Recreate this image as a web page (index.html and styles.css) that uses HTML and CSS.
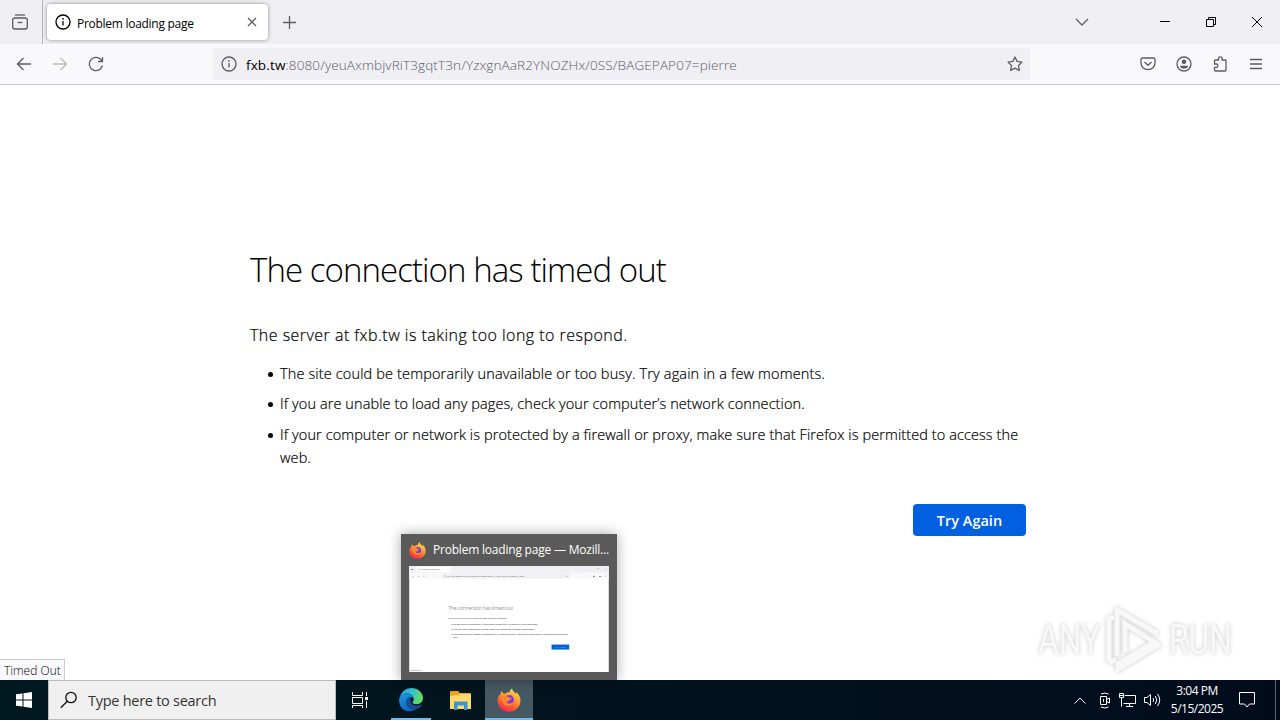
FILE: index.html
```html
<!DOCTYPE html>
<html lang="en">
  <head>
    <meta charset="utf-8">
    <title>Problem loading page</title>
    <link rel="stylesheet" href="styles.css">
  </head>
  <body>
    <svg class="defs" width="0" height="0">
      <defs>
        <linearGradient id="fox-body" x1="0.8" y1="0" x2="0.3" y2="1">
          <stop offset="0" stop-color="#ffe24a" />
          <stop offset="0.4" stop-color="#ffa02e" />
          <stop offset="0.75" stop-color="#ff5038" />
          <stop offset="1" stop-color="#ee2465" />
        </linearGradient>
        <linearGradient id="edge-top" x1="0" y1="0" x2="1" y2="0.3">
          <stop offset="0" stop-color="#229be0" />
          <stop offset="0.5" stop-color="#2fc3d5" />
          <stop offset="1" stop-color="#62dc62" />
        </linearGradient>
        <linearGradient id="edge-side" x1="0" y1="0" x2="0.6" y2="1">
          <stop offset="0" stop-color="#1b9de2" />
          <stop offset="1" stop-color="#1260b4" />
        </linearGradient>
        <symbol id="info" viewBox="0 0 16 16">
          <circle cx="8" cy="8" r="7" fill="none" stroke="currentColor" stroke-width="1.3" />
          <path d="M8 7v4.6" stroke="currentColor" stroke-width="1.3" />
          <circle cx="8" cy="4.8" r="0.9" fill="currentColor" />
        </symbol>
        <symbol id="firefox" viewBox="0 0 24 24">
          <path d="M3.3 6.3 4.4 3l2 2.6 2.1.2C10 4 11.5 4.2 12.5 4.6 12.6 2.8 13.6 1.4 15 .5c.4 2.5 2.2 3.2 4 5.2.5-.5.5-1 .5-1.7C22 6.500 23.500 9 23.500 12.500 23.500 19 18.400 23.800 12 23.800S.6 19 .6 12.700C.6 10 1.500 8 3.300 6.300z" fill="url(#fox-body)" />
          <circle cx="12.300" cy="11.800" r="4.700" fill="#7a3bdf" />
          <path d="M6.500 8.200c2-.7 4.500.2 5.800 1.400 1 .1 2 .3 2.400.8-.5 1.100-2.200 1.300-2.800 2.400-.8 1-1.900 1-2.700.7.700 2.600 4.400 3 7 .5-.4 3.800-8 6-10.500.4-.9-2.200-.3-5 .8-6.200z" fill="#ff8a26" />
        </symbol>
      </defs>
    </svg>

    <div class="tab-bar">
      <div class="view-button">
        <svg width="18" height="18" viewBox="0 0 18 18" class="line">
          <path d="M4 2h10" />
          <rect x="1.700" y="5" width="14.600" height="11" rx="2" />
          <path d="M6.700 9.500h4.600" />
        </svg>
      </div>
      <div class="tab">
        <svg width="16" height="16"><use href="#info" /></svg>
        <span class="tab-title">Problem loading page</span>
        <svg width="10" height="10" viewBox="0 0 10 10" class="line"><path d="M1 1l8 8M9 1 1 9" /></svg>
      </div>
      <svg class="new-tab line" width="13" height="13" viewBox="0 0 13 13"><path d="M6.500 0v13M0 6.500h13" /></svg>
      <div class="window-buttons">
        <svg width="14" height="8" viewBox="0 0 14 8" class="line"><path d="M1 1l6 6 6-6" /></svg>
        <svg width="10" height="10" viewBox="0 0 10 10" class="caption"><path d="M0 4.500h10" /></svg>
        <svg width="10" height="10" viewBox="0 0 10 10" class="caption"><path d="M.5 2.500h7v7h-7zM2.500 2.500v-2h7v7h-2" /></svg>
        <svg width="10" height="10" viewBox="0 0 10 10" class="caption"><path d="M0 0l10 10M10 0 0 10" /></svg>
      </div>
    </div>

    <div class="nav-bar">
      <div class="nav-buttons">
        <svg width="16" height="16" viewBox="0 0 16 16" class="line"><path d="M15 8H1.500M7.500 2l-6 6 6 6" /></svg>
        <svg width="16" height="16" viewBox="0 0 16 16" class="line disabled"><path d="M1 8h13.500M8.500 2l6 6-6 6" /></svg>
        <svg width="16" height="16" viewBox="0 0 16 16" class="line"><path d="M14.400 9.500A6.600 6.600 0 1 1 12.600 3.300L14.300 5M14.500 1v4.500H10" /></svg>
      </div>
      <div class="url-bar">
        <svg width="16" height="16"><use href="#info" /></svg>
        <span class="url"><b>fxb.tw</b>:8080/yeuAxmbjvRiT3gqtT3n/YzxgnAaR2YNOZHx/0SS/BAGEPAP07=pierre</span>
        <svg width="16" height="16" viewBox="0 0 16 16" class="line"><path d="M8 1l2.100 4.400 4.900.7-3.500 3.400.8 4.900L8 12.100l-4.300 2.300.8-4.900L1 6.100l4.900-.7z" /></svg>
      </div>
      <div class="tools">
        <svg width="16" height="16" viewBox="0 0 16 16" class="line"><path d="M2.500 2h11q1.500 0 1.500 1.500V7A7 6.700 0 0 1 1 7V3.500Q1 2 2.500 2zM4.500 6 8 9.300 11.500 6" /></svg>
        <svg width="16" height="16" viewBox="0 0 16 16" class="line"><circle cx="8" cy="8" r="7" /><circle cx="8" cy="5.800" r="2.300" class="solid" /><path d="M4 9.700h8c0 3.800-8 3.800-8 0z" class="solid" /></svg>
        <svg width="16" height="16" viewBox="0 0 16 16" class="line"><path d="M6.500 4V2.600a1.800 1.800 0 0 1 3.600 0V4H13.300q.7 0 .7.700V14.200q0 .8-.8.8H3.500q-1 0-1-1V11.300H4.300a1.600 1.600 0 0 0 0-3.300H2.500V5q0-1 1-1z" /></svg>
        <svg width="16" height="16" viewBox="0 0 16 16" class="line"><path d="M2 3.500h12M2 8h12M2 12.500h12" /></svg>
      </div>
    </div>

    <main class="page">
      <div class="error">
        <h1>The connection has timed out</h1>
        <p>The server at fxb.tw is taking too long to respond.</p>
        <ul>
          <li>The site could be temporarily unavailable or too busy. Try again in a few moments.</li>
          <li>If you are unable to load any pages, check your computer’s network connection.</li>
          <li>If your computer or network is protected by a firewall or proxy, make sure that Firefox is permitted to access the<br>web.</li>
        </ul>
        <button class="try-again">Try Again</button>
      </div>

      <div class="status">Timed Out</div>

      <div class="preview">
        <div class="preview-title">
          <svg width="17" height="17"><use href="#firefox" /></svg>
          <span>Problem loading page — Mozill...</span>
        </div>
        <svg class="preview-page" width="200" height="106" viewBox="0 0 1280 680">
          <rect width="1280" height="680" fill="#fff" />
          <rect width="1280" height="44" fill="#f0f0f4" />
          <rect y="44" width="1280" height="40" fill="#f9f9fb" />
          <rect x="47" y="4" width="221" height="36" fill="#fff" />
          <rect x="213" y="48" width="817" height="32" fill="#f0f0f4" />
          <g font-size="15" fill="#555">
            <text x="12" y="28">▣</text>
            <text x="56" y="28" textLength="138">ⓘ Problem loading</text>
            <text x="246" y="28">× +</text>
            <text x="1160" y="28" textLength="104">– ❐ ×</text>
            <text x="16" y="71" textLength="88">← → ↻</text>
            <text x="220" y="71" textLength="517">ⓘ fxb.tw:8080/yeuAxmbjvRiT3gqtT3n/YzxgnAaR2YNOZHx/0SS</text>
            <text x="1006" y="71">☆</text>
            <text x="1140" y="71" textLength="124">♡ ◉ ▣ ≡</text>
            <text x="4" y="675">Timed Out</text>
          </g>
          <g font-size="16" fill="#333">
            <text x="250" y="282" font-size="34" fill="#999" textLength="416">The connection has timed out</text>
            <text x="250" y="341" textLength="377">The server at fxb.tw is taking too long to respond.</text>
            <text x="266" y="379" textLength="559">• The site could be temporarily unavailable or too busy. Try again in a few moments.</text>
            <text x="266" y="409" textLength="539">• If you are unable to load any pages, check your computer’s network connection.</text>
            <text x="266" y="440" textLength="752">• If your computer or network is protected by a firewall or proxy, make sure that Firefox is permitted to access the</text>
            <text x="280" y="463">web.</text>
          </g>
          <rect x="913" y="504" width="113" height="32" fill="#0060df" />
          <text x="937" y="526" font-size="15" fill="#9cc4f5">Try Again</text>
        </svg>
      </div>

      <div class="watermark">
        <span>ANY</span>
        <svg width="56" height="66" viewBox="0 0 56 66">
          <path d="M11 50V4L52 28M19 46V18L48 36 12 58v5L54 38M3 56V12h5M3 56l7-2" />
        </svg>
        <span>RUN</span>
      </div>
    </main>

    <footer class="taskbar">
      <div class="start">
        <svg width="16" height="16" viewBox="0 0 16 16"><path d="M0 2.300 6.500 1.400V7.500H0zM7.500 1.200 16 0V7.500H7.500zM0 8.500H6.500V14.600L0 13.700zM7.500 8.500H16V16L7.500 14.800z" fill="#fff" /></svg>
      </div>
      <div class="search">
        <svg width="18" height="18" viewBox="0 0 18 18"><circle cx="11" cy="6.500" r="5.200" /><path d="M7.300 10.200.8 16.800" /></svg>
        <span>Type here to search</span>
      </div>
      <div class="task">
        <svg width="16" height="16" viewBox="0 0 16 16" fill="none" stroke="#fff"><path d="M.5 0v3.500h10V0M.5 5.500h10v6H.5zM.5 16v-2.500h10V16M14.500 0v4M14.500 9v7" /><path d="M13 5h3v3h-3z" fill="#fff" stroke="none" /></svg>
      </div>
      <div class="task open">
        <svg width="24" height="24" viewBox="0 0 24 24">
          <path d="M1 9C2.500 3.500 7 0 12.300 0 19 0 24 4.800 24 10c0 4-3 6.200-6.300 6.200-2.700 0-4.200-1-4.200-2 0-.8 1.300-1.300 1.300-3.200C14.800 8 11.500 5.500 8 5.500 5 5.500 2.500 7 1 9z" fill="url(#edge-top)" />
          <path d="M.1 12C.1 8 4 5.500 8 5.500c4 0 6.800 2.700 6.800 5.500-1-1.500-2.300-1.900-3.400-1.900C9 9.100 7.500 11.500 7.500 14c0 5 5 8.500 10 6.900C12 25.500.1 24 .1 12z" fill="url(#edge-side)" />
          <path d="M11.400 9.100C8 10 7.500 11.500 7.500 14c0 5.500 6 9 11.500 6.500 1.700-.8 3-2 3.700-3.100.3-.6-.1-.9-.7-.6-4.500 2.200-10.500.4-10.500-4.500 0-1.300.6-2.200.6-3.200z" fill="#124f98" />
        </svg>
      </div>
      <div class="task">
        <svg width="21" height="19" viewBox="0 0 21 19">
          <path d="M0 1q0-1 1-1h7l2 2h10q1 0 1 1v15H0z" fill="#e8a51d" />
          <path d="M0 5l8-1 2-1h11v15H0z" fill="#ffd969" />
          <path d="M4 10.500h13.500V19H14v-4.500H7.500V19H4z" fill="#3d93cf" />
        </svg>
      </div>
      <div class="task open active">
        <svg width="24" height="24"><use href="#firefox" /></svg>
      </div>
      <div class="tray">
        <svg width="12" height="7" viewBox="0 0 12 7"><path d="M.5 6.500 6 1l5.500 5.500" /></svg>
        <svg width="12" height="17" viewBox="0 0 12 17"><path d="M1.500 4.500h6v8h-6zM7.500 7.500l3-1.500v5l-3-1.500M4.500 7v3M2 2q4-2 7.500 0M2 15q4 2 7.500 0" /></svg>
        <svg width="17" height="14" viewBox="0 0 17 14"><path d="M5.500 2.500h11v8H4.500M10.500 10.500v3M7 13.500h7M.5.500h4v4h-4zM2.500 4.500v9M.500 2.500h4" /></svg>
        <svg width="17" height="14" viewBox="0 0 17 14"><path d="M.5 4.500h2.500l3.500-3v11L3 9.500H.5zM9 5q1.500 2 0 4M11.300 3q3 4 0 8M13.500 1q4.500 6 0 12" /></svg>
        <div class="clock">
          <span>3:04 PM</span>
          <span>5/15/2025</span>
        </div>
        <svg width="16" height="16" viewBox="0 0 16 16"><path d="M.5.500h15v11.500h-5L8 15 5.500 12h-5z" /></svg>
      </div>
    </footer>
  </body>
</html>
```
FILE: styles.css
```css
* {
  box-sizing: border-box;
}

body {
  display: flex;
  flex-direction: column;
  width: 1280px;
  height: 720px;
  margin: 0;
  overflow: hidden;
  font-family: "Open Sans", "Noto Sans", sans-serif;
  color: #000;
  background: #fff;
}

svg {
  flex: none;
}

.defs {
  position: absolute;
}

.line,
.caption {
  fill: none;
  stroke: #5b5b66;
  stroke-width: 1.3;
  stroke-linejoin: round;
}

.caption {
  stroke: #000;
  stroke-width: 1;
}

.solid {
  fill: #5b5b66;
  stroke: none;
}

.disabled {
  opacity: 0.4;
}

/* browser toolbars */
.tab-bar {
  display: flex;
  align-items: center;
  height: 44px;
  background: #f0f0f4;
}

.view-button {
  display: flex;
  align-items: center;
  width: 43px;
  height: 44px;
  padding-left: 11px;
  border-right: 1px solid #b4b4bb;
}

.tab {
  display: flex;
  align-items: center;
  width: 221px;
  height: 36px;
  margin-left: 4px;
  padding: 0 11px 0 8px;
  border-radius: 4px;
  background: #fff;
  box-shadow: 0 0 4px rgba(0, 0, 0, 0.4);
}

.tab-title {
  flex: 1;
  margin-left: 6px;
  padding-top: 2px;
  font-size: 12px;
  letter-spacing: -0.28px;
}

.new-tab {
  margin-left: 15px;
}

.window-buttons {
  display: flex;
  align-items: center;
  margin-left: auto;
  padding-right: 18px;
  gap: 36px;
}

.window-buttons svg:first-child {
  margin-right: 35px;
}

.nav-bar {
  display: flex;
  align-items: center;
  height: 41px;
  border-bottom: 1px solid #ccccd0;
  background: #f9f9fb;
}

.nav-buttons {
  display: flex;
  gap: 20px;
  width: 213px;
  padding-left: 16px;
}

.url-bar {
  display: flex;
  align-items: center;
  width: 817px;
  height: 32px;
  padding: 0 7px 0 8px;
  background: #f0f0f4;
  color: #5b5b66;
}

.url {
  flex: 1;
  margin-left: 9px;
  padding-top: 1px;
  font-size: 13.5px;
  font-weight: 300;
  letter-spacing: 0.13px;
  white-space: nowrap;
}

.url b {
  font-weight: 400;
  color: #000;
}

.tools {
  display: flex;
  gap: 20px;
  margin-left: auto;
  padding-right: 16px;
}

/* error page */
.page {
  position: relative;
  flex: 1;
}

.error {
  display: flex;
  flex-direction: column;
  width: 776px;
  margin-left: 250px;
  padding-top: 161px;
}

h1 {
  margin: 0;
  font-size: 33px;
  font-weight: 300;
  line-height: 48px;
  letter-spacing: -0.93px;
  white-space: nowrap;
}

p {
  margin: 29px 0 0;
  font-size: 16px;
  font-weight: 300;
  line-height: 24px;
  letter-spacing: 0.47px;
  white-space: nowrap;
  -webkit-text-stroke: 0.2px #000;
}

ul {
  margin: 15px 0 0;
  padding-left: 30px;
  list-style: none;
  font-size: 14.5px;
  font-weight: 300;
  line-height: 23px;
  letter-spacing: 0.095px;
  -webkit-text-stroke: 0.2px #000;
}

li {
  position: relative;
  margin-bottom: 8px;
  white-space: nowrap;
}

li:first-child {
  margin-bottom: 7px;
  letter-spacing: 0.145px;
}

li::before {
  content: "";
  position: absolute;
  left: -12px;
  top: 10px;
  width: 5px;
  height: 5px;
  border-radius: 50%;
  background: #000;
}

.try-again {
  align-self: flex-end;
  width: 113px;
  height: 32px;
  margin-top: 27px;
  padding-top: 2px;
  border: 0;
  border-radius: 4px;
  background: #0060df;
  color: #fff;
  font-family: inherit;
  font-size: 14.5px;
  font-weight: 600;
}

.status {
  position: absolute;
  left: 0;
  bottom: 0;
  width: 65px;
  height: 21px;
  padding-left: 4px;
  border: 1px solid #ccccd0;
  border-width: 1px 1px 0 0;
  background: #f9f9fb;
  font-size: 12px;
  font-weight: 300;
  line-height: 22px;
  white-space: nowrap;
}

/* window preview that hangs over the page */
.preview {
  position: absolute;
  left: 401px;
  bottom: 0;
  width: 216px;
  height: 146px;
  padding: 0 8px;
  background: #5a5a5a;
  box-shadow: 0 0 12px rgba(0, 0, 0, 0.35);
}

.preview-title {
  display: flex;
  align-items: center;
  gap: 7px;
  height: 32px;
  color: #fff;
  font-size: 12px;
  letter-spacing: -0.21px;
  white-space: nowrap;
}

.preview-title span {
  padding-bottom: 1px;
}

.preview-page {
  display: block;
}

.watermark {
  position: absolute;
  left: 1038px;
  top: 521px;
  display: flex;
  align-items: center;
  color: #f8f8f8;
  font-family: Roboto, sans-serif;
  font-size: 43px;
  line-height: 66px;
  filter: drop-shadow(0 0 2px rgba(0, 0, 0, 0.22));
}

.watermark span {
  width: 64px;
  transform: scaleX(0.74);
  transform-origin: left;
}

.watermark svg {
  margin: 0 7px 0 4px;
  fill: none;
  stroke: #f8f8f8;
  stroke-width: 5;
}

/* taskbar */
.taskbar {
  display: flex;
  height: 40px;
  background: linear-gradient(90deg, #001820, #01131e 50%, #020b1c);
}

.start {
  display: flex;
  align-items: center;
  justify-content: center;
  width: 48px;
}

.search {
  display: flex;
  align-items: center;
  gap: 10px;
  width: 288px;
  padding-left: 11px;
  border: 1px solid #bbb;
  background: #f0f0f0;
  color: #333;
  font-size: 14.5px;
  letter-spacing: -0.27px;
  white-space: nowrap;
}

.search svg {
  fill: none;
  stroke: #111;
  stroke-width: 1.3;
}

.task {
  display: flex;
  align-items: center;
  justify-content: center;
  width: 48px;
  margin-right: 1px;
}

.task:nth-child(3) {
  margin-right: 3px;
}

.open {
  background: linear-gradient(#76b9ed, #76b9ed) center bottom / 40px 2px no-repeat;
}

.active {
  background: linear-gradient(#76b9ed, #76b9ed) center bottom / 48px 2px no-repeat #465861;
}

.tray {
  display: flex;
  align-items: center;
  gap: 8px;
  margin-left: auto;
  margin-right: 4px;
  padding-right: 20px;
  border-right: 1px solid #5c6470;
  color: #fff;
}

.tray svg {
  fill: none;
  stroke: #fff;
}

.tray svg:first-child {
  margin-right: 5px;
}

.clock {
  display: flex;
  flex-direction: column;
  align-items: center;
  width: 62px;
  padding-right: 6px;
  font-size: 12px;
  line-height: 18px;
  letter-spacing: -0.5px;
}
```
